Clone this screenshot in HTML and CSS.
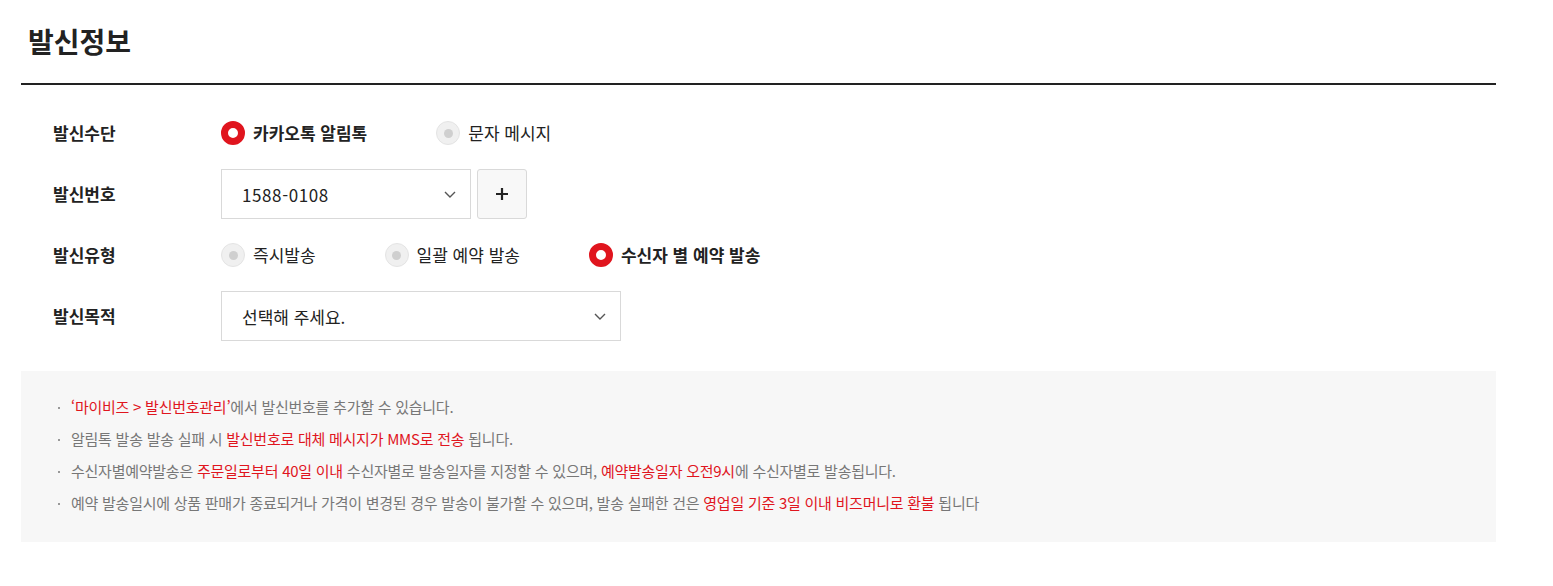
FILE: index.html
```html
<!DOCTYPE html>
<html lang="ko">
<head>
    <meta charset="UTF-8">
    <meta name="viewport" content="width=device-width, initial-scale=1.0">
    <title>발신정보</title>
    <link rel="stylesheet" href="styles.css">
</head>
<body>
    <div class="section">
        <h2 class="section-title">발신정보</h2>

        <div class="form">
            <div class="form-row">
                <div class="form-label">발신수단</div>
                <div class="form-field radios">
                    <label class="radio">
                        <input type="radio" name="channel" checked>
                        <span>카카오톡 알림톡</span>
                    </label>
                    <label class="radio">
                        <input type="radio" name="channel" disabled>
                        <span>문자 메시지</span>
                    </label>
                </div>
            </div>

            <div class="form-row">
                <div class="form-label">발신번호</div>
                <div class="form-field">
                    <div class="select select-sm">
                        <span class="num">1588-0108</span>
                        <svg width="12" height="7" viewBox="0 0 12 7"><path d="M1 1l5 5 5-5" fill="none" stroke="#555" stroke-width="1.4"/></svg>
                    </div>
                    <button type="button" class="btn-add">
                        <svg width="14" height="14" viewBox="0 0 14 14"><path d="M7 1v12M1 7h12" stroke="#222" stroke-width="2.2"/></svg>
                    </button>
                </div>
            </div>

            <div class="form-row">
                <div class="form-label">발신유형</div>
                <div class="form-field radios">
                    <label class="radio">
                        <input type="radio" name="type" disabled>
                        <span>즉시발송</span>
                    </label>
                    <label class="radio">
                        <input type="radio" name="type" disabled>
                        <span>일괄 예약 발송</span>
                    </label>
                    <label class="radio">
                        <input type="radio" name="type" checked>
                        <span>수신자 별 예약 발송</span>
                    </label>
                </div>
            </div>

            <div class="form-row">
                <div class="form-label">발신목적</div>
                <div class="form-field">
                    <div class="select select-lg">
                        <span>선택해 주세요.</span>
                        <svg width="12" height="7" viewBox="0 0 12 7"><path d="M1 1l5 5 5-5" fill="none" stroke="#555" stroke-width="1.4"/></svg>
                    </div>
                </div>
            </div>
        </div>

        <ul class="notice">
            <li><em>‘마이비즈 &gt; 발신번호관리’</em>에서 발신번호를 추가할 수 있습니다.</li>
            <li>알림톡 발송 발송 실패 시 <em>발신번호로 대체 메시지가 MMS로 전송</em> 됩니다.</li>
            <li>수신자별예약발송은 <em>주문일로부터 40일 이내</em> 수신자별로 발송일자를 지정할 수 있으며, <em>예약발송일자 오전9시</em>에 수신자별로 발송됩니다.</li>
            <li>예약 발송일시에 상품 판매가 종료되거나 가격이 변경된 경우 발송이 불가할 수 있으며, 발송 실패한 건은 <em>영업일 기준 3일 이내 비즈머니로 환불</em> 됩니다</li>
        </ul>
    </div>
</body>
</html>
```

FILE: styles.css
```css
:root {
    --text-color: #222;
    --muted-color: #777;
    --point-color: #e0151e;
    --border-color: #d9d9d9;
    --box-color: #f7f7f7;
}
* {
    margin: 0;
    padding: 0;
    box-sizing: border-box;
}
body {
    font-family: 'Noto Sans CJK KR', 'Noto Sans', sans-serif;
    color: var(--text-color);
    background: #fff;
}
.section {
    width: 1475px;
    margin-left: 21px;
}
.section-title {
    padding: 21px 0 22px 7px;
    font-size: 28px;
    line-height: 40px;
    font-weight: 700;
    border-bottom: 2px solid var(--text-color);
}
.form {
    display: flex;
    flex-direction: column;
    gap: 11px;
    padding: 23px 0 0 32px;
}
.form-row {
    display: flex;
    align-items: center;
    height: 50px;
}
.form-label {
    width: 168px;
    font-size: 17px;
    font-weight: 700;
    margin-top: -2px;
}
.form-field {
    display: flex;
    align-items: center;
    gap: 6px;
}
.radios {
    gap: 69px;
}
.radio {
    display: flex;
    align-items: center;
    gap: 8px;
    font-size: 17px;
    cursor: pointer;
}
.radio span {
    margin-top: -2px;
}
.radio input {
    appearance: none;
    width: 24px;
    height: 24px;
    margin: 0;
    border-radius: 50%;
    background: #f0f0f0;
    border: 1px solid #e4e4e4;
    position: relative;
}
.radio input::after {
    content: "";
    position: absolute;
    top: 50%;
    left: 50%;
    width: 9px;
    height: 9px;
    margin: -4.5px 0 0 -4.5px;
    border-radius: 50%;
    background: #cfcfcf;
}
.radio input:checked {
    background: #fff;
    border: 7px solid var(--point-color);
}
.radio input:checked::after {
    display: none;
}
.radio input:checked + span {
    font-weight: 700;
}
.select {
    display: flex;
    align-items: center;
    justify-content: space-between;
    height: 50px;
    padding: 0 14px 0 20px;
    border: 1px solid var(--border-color);
    font-size: 17px;
    background: #fff;
}
.select .num {
    letter-spacing: 0.6px;
}
.select-sm {
    width: 250px;
}
.select-lg {
    width: 400px;
}
.btn-add {
    display: flex;
    align-items: center;
    justify-content: center;
    width: 50px;
    height: 50px;
    border: 1px solid var(--border-color);
    border-radius: 3px;
    background: #f8f8f8;
}
.notice {
    list-style: none;
    margin-top: 30px;
    padding: 20px 0 23px 50px;
    background: var(--box-color);
    font-size: 15px;
    line-height: 32px;
    letter-spacing: -0.25px;
    color: var(--muted-color);
}
.notice li {
    position: relative;
}
.notice li::before {
    content: "";
    position: absolute;
    left: -13px;
    top: 16px;
    width: 2px;
    height: 2px;
    background: #999;
}
.notice em {
    font-style: normal;
    color: var(--point-color);
}
```
